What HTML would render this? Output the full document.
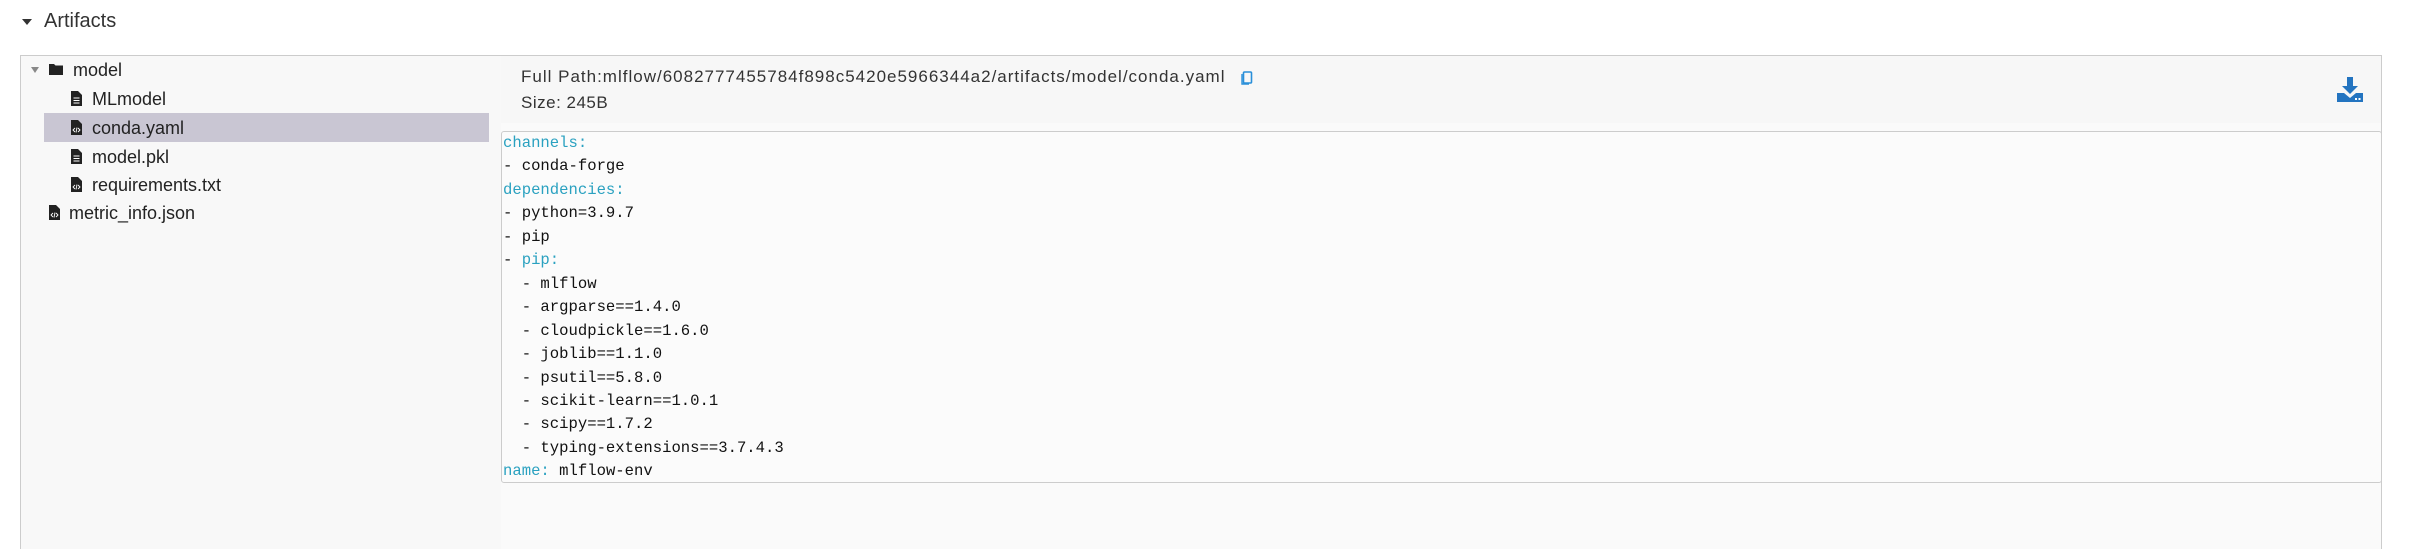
<!DOCTYPE html>
<html><head><meta charset="utf-8"><style>
*{margin:0;padding:0;box-sizing:border-box}
html,body{width:2413px;height:549px;overflow:hidden}
body{background:#fff;font-family:"Liberation Sans",sans-serif;color:#333;position:relative}
.abs{position:absolute}
.t{font-size:18px;color:#222;white-space:nowrap;line-height:28px}
.code{font-family:"Liberation Mono",monospace;font-size:15.6px;line-height:23.45px;white-space:pre;color:#111}
.k{color:#2aa1c0}
</style></head><body>
<div class="abs" style="left:22px;top:19px;width:0;height:0;border-left:5px solid transparent;border-right:5px solid transparent;border-top:6px solid #333"></div>
<div class="abs" style="left:44px;top:10px;font-size:20px;color:#333">Artifacts</div>

<div class="abs" style="left:20px;top:55px;width:2362px;height:494px;border:1px solid #ccc;border-bottom:0;background:#fafafa"></div>
<div class="abs" style="left:21px;top:56px;width:480px;height:493px;background:#f8f8f8"></div>
<div class="abs" style="left:501px;top:56px;width:1880px;height:67px;background:#f7f7f7"></div>

<div class="abs" style="left:44px;top:113px;width:445px;height:29px;background:#c9c6d3"></div>

<div class="abs" style="left:31px;top:67px;width:0;height:0;border-left:4px solid transparent;border-right:4px solid transparent;border-top:6px solid #888"></div>
<svg class="abs" style="left:49px;top:63px" width="14" height="12" viewBox="0 0 14 12"><path d="M0 1h5l1.5 1.5H14V12H0z" fill="#222"/></svg>
<div class="abs t" style="left:73px;top:56px">model</div>

<svg class="abs" style="left:71px;top:91px" width="11" height="15" viewBox="0 0 11 15"><path d="M0 0h7l4 4v11H0z" fill="#222"/><path d="M2.5 7h6M2.5 9.5h6M2.5 12h6" stroke="#fff" stroke-width="1"/></svg>
<div class="abs t" style="left:92px;top:85px">MLmodel</div>

<svg class="abs" style="left:71px;top:120px" width="11" height="15" viewBox="0 0 11 15"><path d="M0 0h7l4 4v11H0z" fill="#222"/><path d="M4 8l-2 2 2 2M7 8l2 2-2 2M6 7.5l-1 5" stroke="#fff" stroke-width="0.9" fill="none"/></svg>
<div class="abs t" style="left:92px;top:114px">conda.yaml</div>

<svg class="abs" style="left:71px;top:149px" width="11" height="15" viewBox="0 0 11 15"><path d="M0 0h7l4 4v11H0z" fill="#222"/><path d="M2.5 7h6M2.5 9.5h6M2.5 12h6" stroke="#fff" stroke-width="1"/></svg>
<div class="abs t" style="left:92px;top:143px">model.pkl</div>

<svg class="abs" style="left:71px;top:177px" width="11" height="15" viewBox="0 0 11 15"><path d="M0 0h7l4 4v11H0z" fill="#222"/><path d="M4 8l-2 2 2 2M7 8l2 2-2 2M6 7.5l-1 5" stroke="#fff" stroke-width="0.9" fill="none"/></svg>
<div class="abs t" style="left:92px;top:171px">requirements.txt</div>

<svg class="abs" style="left:49px;top:205px" width="11" height="15" viewBox="0 0 11 15"><path d="M0 0h7l4 4v11H0z" fill="#222"/><path d="M4 8l-2 2 2 2M7 8l2 2-2 2M6 7.5l-1 5" stroke="#fff" stroke-width="0.9" fill="none"/></svg>
<div class="abs t" style="left:69px;top:199px">metric_info.json</div>

<div class="abs" style="left:521px;top:66px;font-size:17px;letter-spacing:1px;color:#333;white-space:nowrap;line-height:22px">Full Path:mlflow/6082777455784f898c5420e5966344a2/artifacts/model/conda.yaml</div>
<svg class="abs" style="left:1240px;top:71px" width="14" height="14" viewBox="0 0 14 14"><rect x="3.5" y="1" width="8" height="11" rx="1" fill="none" stroke="#2a8fd9" stroke-width="1.6"/><path d="M2 3v10h7" fill="none" stroke="#2a8fd9" stroke-width="1.4"/></svg>
<div class="abs" style="left:521px;top:92px;font-size:17px;letter-spacing:0.5px;color:#333;line-height:22px">Size: 245B</div>

<svg class="abs" style="left:2337px;top:77px" width="26" height="26" viewBox="0 0 26 26"><path d="M10 0h6v9h5l-8 8-8-8h5z" fill="#2374c0"/><path d="M0 16h7l6 5 6-5h7v9H0z" fill="#2374c0"/><rect x="18" y="21" width="2" height="2" fill="#fff"/><rect x="21.5" y="21" width="2" height="2" fill="#fff"/></svg>

<div class="abs" style="left:501px;top:131px;width:1881px;height:352px;border:1px solid #ccc;border-radius:3px;background:#fbfbfb"></div>
<div class="abs code" style="left:503px;top:132px"><span class="k">channels:</span>
- conda-forge
<span class="k">dependencies:</span>
- python=3.9.7
- pip
- <span class="k">pip:</span>
  - mlflow
  - argparse==1.4.0
  - cloudpickle==1.6.0
  - joblib==1.1.0
  - psutil==5.8.0
  - scikit-learn==1.0.1
  - scipy==1.7.2
  - typing-extensions==3.7.4.3
<span class="k">name:</span> mlflow-env</div>
</body></html>
